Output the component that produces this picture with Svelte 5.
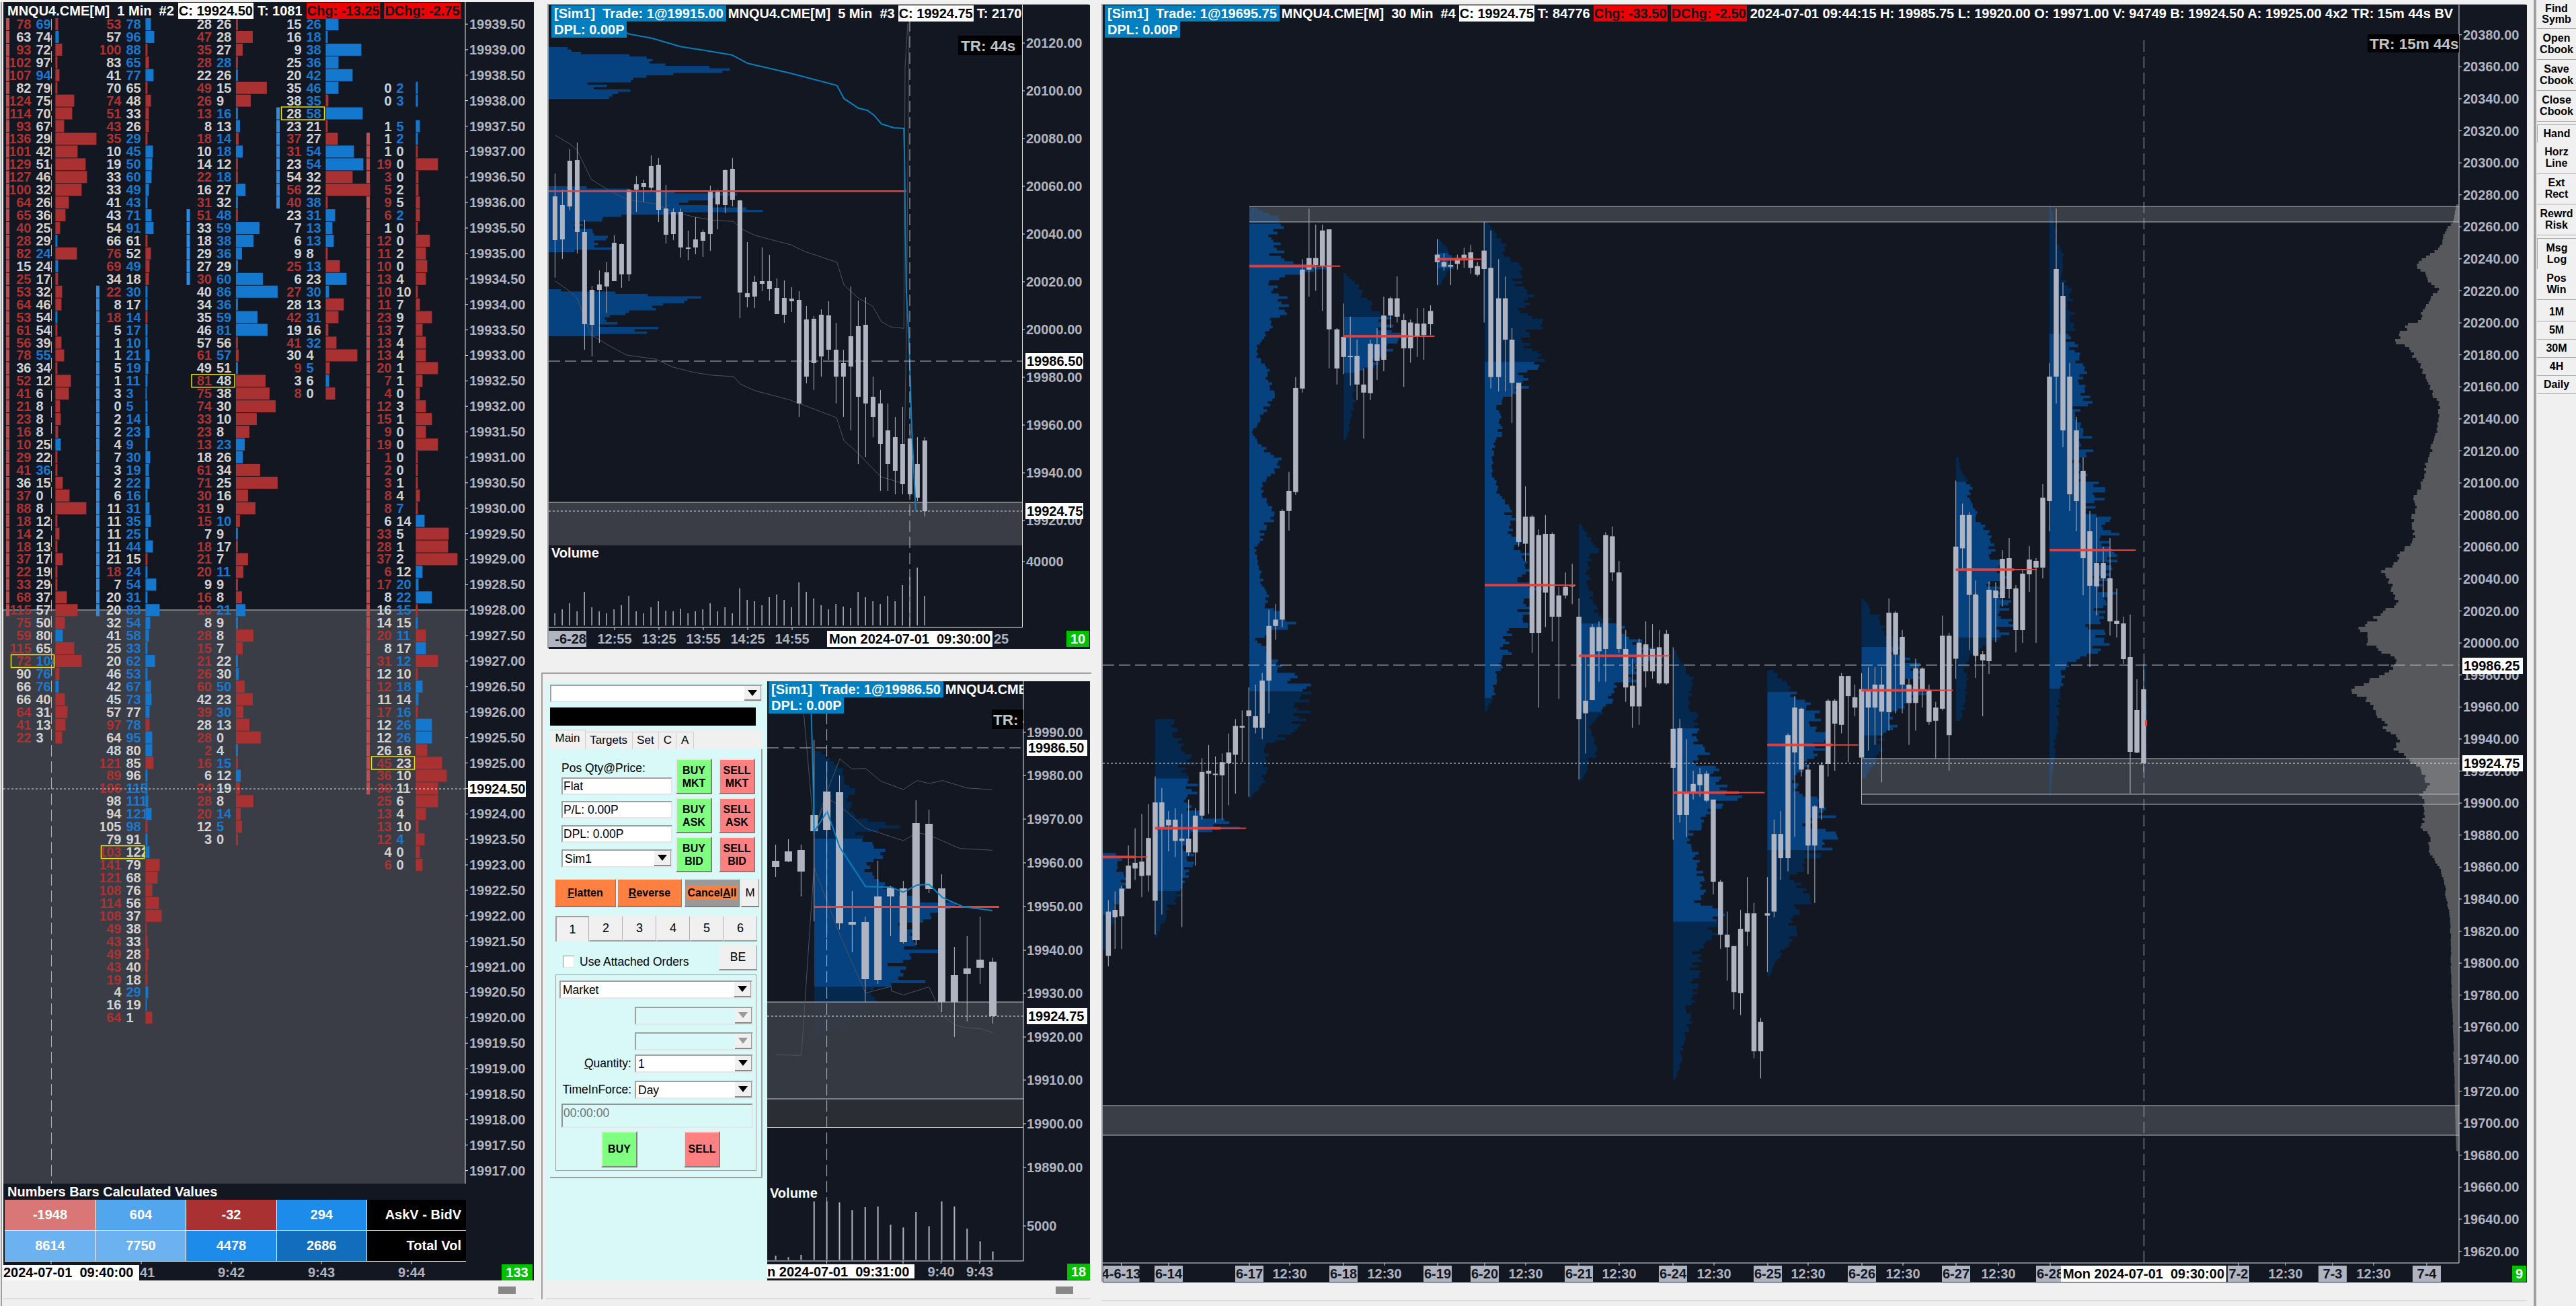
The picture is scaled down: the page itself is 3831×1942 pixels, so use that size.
<script>
// crop readings -> page pixels
const crop = (x0, sx, y0, sy) => ([x, y]) => [x0 + x / sx, y0 + y / sy];
const c3 = crop(800, 1.96, 990, 3);
const c4 = crop(800, 1.96, 1400, 2.893);
const c7 = crop(800, 1.889, 0, 3);

const noise = (i) => {
  const v = Math.sin(i * 12.9898 + 4.1) * 43758.5453;
  return v - Math.floor(v);
};

const line = (pts) => pts.map((p) => p[0].toFixed(1) + ',' + p[1].toFixed(1)).join(' ');

function lerp(anchors, y) {
  for (let i = 1; i < anchors.length; i++) {
    if (y <= anchors[i][0]) {
      const a = anchors[i - 1], b = anchors[i];
      return a[1] + ((y - a[0]) / (b[0] - a[0])) * (b[1] - a[1]);
    }
  }
  return anchors[anchors.length - 1][1];
}

// stepped volume profile: two paths, value area and the rest
function profile(x0, anchors, vaTop, vaBot, step = 4, jitter = 0.16) {
  let va = '', rest = '';
  const y0 = anchors[0][0], y1 = anchors[anchors.length - 1][0];
  let n = Math.round(x0);
  for (let y = y0; y < y1; y += step) {
    n++;
    const slow = noise(Math.floor(n / 4) + 900) - 0.5;
    const w = lerp(anchors, y) * (1 + jitter * (noise(n) - 0.5) + jitter * slow);
    const seg = `M${x0} ${y}h${w.toFixed(1)}v${step}h${-w.toFixed(1)}z`;
    if (y >= vaTop && y < vaBot) va += seg;
    else rest += seg;
  }
  return { va, rest };
}

/* ---------- footprint chart ---------- */
const fpCols = [
  'r78 b69 -4,g63 g74 5,r93 g72 -10,r102 g97 -3,r107 b94 -6,g82 g79 -3,r124 g75 -28,r114 g70 -25,r93 g67 -13,r136 g29 -61,r101 g42 -33,r129 g51 -45,r127 g46 -47,r100 g32 -39,r64 g26 -20,r65 g36 -15,r40 g25 -7,r28 g29 3,r82 b24 -32,g15 g24 4,r25 g17 -4,r53 g32 -10,r64 g46 -9,r53 g54 3,r61 g54 -3,r56 g39 -9,r78 b55 -13,g36 g34 -3,r52 g12 -23,r41 g6 -20,r21 g8 -7,r23 g8 -8,r16 g8 -4,r10 g25 8,r29 g22 -3,r41 b36 -3,g36 g15 -11,r37 g0 -21,r88 g8 -46,r18 g12 -3,r14 g2 -6,r18 g13 -3,r37 g17 -11,r22 g19 -3,r33 g29 -3,r68 g37 -17,r115 g57 -33,r75 g50 -14,r59 g80 11,r115 g65 -28,r72 b104 -39,g90 b76 -6,g66 b76 5,g66 g40 -14,r64 g31 -18,r41 g13 -15,r22 g3 -10',
  'r53 b78 8,g57 b96 13,r100 b88 -3,g83 b65 -5,g41 b77 12,g70 g65 -3,r74 g48 -8,r51 g33 -5,r43 g26 -5,r35 b29 -3,g10 b45 11,g19 b50 10,g33 b60 9,g33 b49 5,g41 b43 3,g43 b71 9,g54 b91 12,g66 g61 -3,r76 g52 -8,r69 b49 -6,g34 g18 -5,r22 b30 3,g8 g17 3,r18 b14 -3,g5 b17 3,g1 b10 3,g1 b21 6,g5 b19 4,g1 b11 3,g3 b3 2,g0 b5 3,g2 b14 3,g2 b23 6,g4 b9 3,g7 b30 7,g3 b19 5,g2 b22 6,g6 b16 3,g11 b31 6,g11 b35 8,g11 b25 4,g11 b44 11,g21 g15 -3,r18 b24 3,g7 b54 16,g20 b31 3,g20 b83 21,g32 b54 7,g41 b58 5,g25 b33 3,g20 b62 14,g46 b53 3,g42 b67 8,g45 b73 9,g57 g77 6,r97 b78 -6,g64 b95 10,g48 g80 10,r121 g85 -12,r89 g96 3,r106 b115 3,g98 b111 4,g94 b121 9,g105 b98 -3,g79 g91 3,r103 g122 6,r141 g79 -21,r121 g68 -18,r108 g76 -10,r114 g56 -20,r108 g37 -24,r49 g38 -2,r43 g33 -3,r49 g28 -5,r43 g40 -3,r19 g18 -3,g4 b29 4,g16 g19 2,r64 g1 -10',
  'g28 g26 -3,r47 g28 -25,r35 g27 -10,r28 b28 -3,g22 g26 3,r49 g15 -46,r26 g9 -22,r13 b16 3,g8 g13 6,r18 b14 -4,g10 b18 10,g14 g12 -3,r22 b18 -3,g16 g27 14,r31 g32 3,r51 b48 -3,g33 b59 35,g18 b38 26,g29 b36 9,g27 g29 3,r30 b60 40,g40 b86 62,g34 b36 3,g35 b59 32,g46 b81 47,g57 g56 -3,r61 b57 -4,g49 g51 3,r81 g48 -44,r75 g38 -50,r74 g30 -59,r33 g10 -31,r23 g8 -20,r13 b23 13,g18 g26 10,r61 g34 -36,r71 g25 -62,r30 g16 -18,r31 g9 -29,r15 b10 -6,g7 g9 3,r18 g17 -3,r21 g7 -18,r20 b11 -11,g9 g9 -3,r16 g8 -9,r10 b21 14,g8 g9 3,r28 g8 -26,r15 g7 -10,r21 g22 3,r26 g30 4,r60 b50 -13,g42 g23 -25,r39 b30 -11,g28 g13 -20,r28 g0 -37,r2 g4 3,r16 b15 -3,g6 g12 7,r24 g19 -6,r28 g8 -26,r20 b14 -7,g12 b5 -9,g3 g0 -3',
  'g15 b26 19,g16 b18 3,g9 b38 53,g25 b36 19,g20 b42 40,g35 b46 19,g38 b35 -4,g28 b58 55,g23 g21 -3,r37 g27 -18,r31 b54 42,g23 b54 56,g54 g32 -40,r56 g22 -66,r40 b38 -3,g23 b31 14,g7 b13 10,g6 b13 12,g9 g8 -3,r25 b13 -21,g6 g23 31,r27 b30 5,g28 g13 -27,r42 b31 -19,g19 g16 -4,r41 b32 -16,g30 g4 -47,r9 b5 -6,g3 g6 5,r8 g0 -14',
  ',,,,,g0 b2 3,g0 b3 3,,g1 b5 6,g1 b2 3,g1 g0 -3,r19 g0 -33,r3 g0 -4,r5 g2 -4,r9 g5 -6,r6 b2 -6,g1 g0 -3,r12 g0 -21,r11 g2 -15,r10 g0 -17,r13 g4 -15,r10 g10 -3,r11 g7 -6,r23 g9 -24,r13 g7 -10,r13 g4 -15,r13 g4 -15,r20 g1 -33,r7 g1 -10,r4 g0 -6,r12 g3 -15,r15 g1 -24,r9 g0 -15,r19 g0 -33,r1 g0 -3,r2 g0 -3,r3 g1 -3,r8 g4 -6,r8 b7 -3,g6 g14 13,r33 g5 -49,r28 g1 -48,r37 g2 -62,r6 g12 10,r17 b20 4,g8 b22 24,g16 b15 -3,g14 g15 3,r20 b11 -15,g8 g17 15,r31 b12 -33,g12 g10 -3,r12 b18 10,g11 g14 4,r17 b16 -3,g12 b26 24,g12 b26 24,g26 g16 -17,r45 g23 -39,r36 g10 -46,r30 g11 -33,r25 g6 -33,r13 g4 -15,r13 g10 -4,r12 b4 -13,g4 g0 -6,r6 g0 -10'
];
const numColor = { r: '#ad3232', b: '#1a78d0', g: '#d2d2d2' };
const rowY = (k) => 36 + 18.94 * k;
const colX = [9, 143, 277.5, 411, 545];
const footprint = fpCols.map((s) =>
  s.split(',').map((cell) => {
    if (!cell) return null;
    const [a, b, bar] = cell.split(' ');
    return { ac: numColor[a[0]], an: a.slice(1), bc: numColor[b[0]], bn: b.slice(1), bar: +bar };
  })
);
const sideBars = [
  { col: 0, from: 0, to: 46, fill: '#c84a4a' },
  { col: 1, from: 21, to: 46, fill: '#2a8ee8' },
  { col: 2, from: 15, to: 20, fill: '#2a8ee8' },
  { col: 3, from: 7, to: 14, fill: '#2a8ee8' },
  { col: 4, from: 9, to: 60, fill: '#c84a4a' }
];
const range = (a, b) => Array.from({ length: b - a + 1 }, (_, i) => a + i);
const imbalance = [
  { col: 3, row: 7 }, { col: 0, row: 50 }, { col: 1, row: 65 }, { col: 2, row: 28 }, { col: 4, row: 58 }
];
const fpPrices = range(0, 45).map((k) => ({ y: 36 + 37.88 * k, t: (19939.5 - k * 0.5).toFixed(2) }));

/* ---------- 5 min chart ---------- */
const hi = [[258,292,357,413],[282,305,356,385],[222,239,307,313],[212,238,345,377],[327,345,482,520],[425,431,483,530],[402,423,431,510],[390,405,426,465],[350,361,418,418],[362,363,408,428],[282,282,408,418],[262,274,282,315],[267,272,278,300],[231,247,279,283],[235,245,312,330],[275,310,349,362],[310,315,348,357],[310,315,368,383],[343,368,369,387],[323,356,368,378],[342,345,358,382],[276,283,348,373],[282,283,304,341],[252,253,305,317],[235,251,297,307],[297,298,435,473],[360,436,442,457],[410,419,441,458],[368,418,422,433],[379,418,430,447],[414,428,467,467],[417,443,468,480],[427,444,448,464],[433,446,600,620],[455,475,560,570],[470,474,540,580],[460,468,530,560],[448,469,520,535],[480,520,560,600],[520,540,560,620],[426,500,545,640],[447,485,590,690],[442,483,600,680],[560,590,620,650],[580,600,660,730],[600,640,690,730],[620,650,700,735],[605,660,720,735],[640,652,735,737],[650,690,740,745],[650,655,760,768]];
const candles5 = hi.map((c, i) => [825.4 + 11 * i, ...c]);
const prof5 = [
  profile(816, [[70,32],[77,56],[83,111],[90,127],[99,222],[107,206],[115,153],[125,85],[133,127],[142,100],[147,32]], 60, 150, 3.5, 0.5),
  profile(816, [[277,64],[283,222],[293,185],[302,196],[313,265],[320,106],[333,53],[343,74],[353,79],[367,122],[373,5]], 270, 380, 3.5, 0.5),
  profile(816, [[430,21],[435,175],[445,159],[457,154],[462,90],[480,106],[490,212],[500,16]], 425, 505, 3.5, 0.5)
];
const vwap5 = [[236,140],[260,153],[320,170],[400,208],[470,225],[545,245],[590,283],[710,327],[840,381],[860,440],[900,482],[925,492],[945,515],[965,553],[1000,570],[1028,573],[1030,720],[1032,1000],[1035,1300],[1042,1500]].map(c7).concat([[1356,640],[1362,760]]);
const band5a = [[48,603],[90,642],[110,670],[150,800],[200,850],[250,890],[330,910],[380,945],[440,968],[490,982],[550,988],[570,1020],[610,1050],[710,1092],[750,1122],[840,1170],[860,1272],[900,1330],[940,1365],[965,1435],[990,1458],[1028,1465]].map(c7).concat([[1346,100],[1350,35]]);
const band5b = [[48,1253],[90,1300],[110,1330],[150,1495]].map(c7).concat([[906,514],[932,528],[975,534],[1001,546],[1033,554],[1059,558],[1091,560],[1101,571],[1123,581],[1176,595],[1244,621],[1255,655],[1276,674],[1310,709],[1344,719],[1348,500],[1352,30]]);
const prices5 = range(0, 10).map((k) => ({ y: 64 + 71 * k, t: (20120 - 20 * k).toFixed(2) }));
const vol5 = [18,24,33,21,50,27,21,18,24,30,44,21,18,27,36,22,21,25,18,21,24,33,21,27,18,55,38,36,30,42,46,38,27,64,50,40,30,24,32,28,26,50,42,36,32,44,36,60,72,86,44];

/* ---------- 1 min profile chart (order panel) ---------- */
const candles1 = [
  [693,1256,1280,1289,1304],[730,1248,1266,1281,1282],[767,1256,1264,1296,1333],[805,1100,1212,1236,1370],[842,1133,1177,1234,1395],[879,1153,1178,1373,1382],[916,1325,1371,1375,1416],[954,1363,1371,1456,1490],[991,1280,1333,1457,1463],[1028,1317,1320,1333,1392],[1065,1310,1321,1401,1403],[1102,1190,1224,1398,1405],[1140,1204,1225,1322,1328],[1177,1300,1321,1490,1505],[1214,1408,1450,1490,1542],[1251,1392,1440,1448,1519],[1289,1363,1427,1439,1463],[1326,1424,1430,1511,1522]
].map(([x, ...r]) => [800 + x / 1.96, ...r]);
const prof1 = profile(1211, [[1117,10],[1130,25],[1145,45],[1165,40],[1175,56],[1200,45],[1215,60],[1225,125],[1235,65],[1246,75],[1265,100],[1280,85],[1300,90],[1320,110],[1340,181],[1348,210],[1360,160],[1375,120],[1395,140],[1405,120],[1415,166],[1430,120],[1450,115],[1457,155],[1466,95],[1490,85],[1505,65],[1520,40],[1535,15],[1543,5]], 1246, 1466, 5, 0.22);
const vwap1 = [[797,215],[803,560],[805,740],[843,650],[880,810],[955,985],[1030,988],[1065,1010],[1105,978],[1140,975],[1180,1035],[1240,1075],[1325,1092]].map(c3);
const band1a = [[775,215],[805,735],[843,560],[880,415],[915,460],[955,458],[1000,515],[1065,552],[1105,512],[1140,525],[1180,512],[1250,545],[1325,553]].map(c3);
const band1b = [[805,730],[843,590],[880,625],[955,725],[1065,780],[1105,745],[1140,755],[1230,815],[1325,823]].map(c3);
const band1c = [[692,487],[768,490],[790,0]].map(c4).concat([[805,900],[880,1200],[955,1460],[1030,1430]].map(c3)).concat([[1030,212],[1065,230],[1140,195],[1180,320],[1215,358],[1250,372],[1290,375],[1325,392]].map(c4));
const prices1 = [[1089,'19990.00'],[1153,'19980.00'],[1218,'19970.00'],[1283,'19960.00'],[1348,'19950.00'],[1413,'19940.00'],[1477,'19930.00'],[1542,'19920.00'],[1606,'19910.00'],[1671,'19900.00'],[1736,'19890.00'],[1823,'5000']];
const vol1 = [1352,1358,1348,1118,1118,1122,1155,1143,1140,1218,1230,1163,1225,1118,1140,1235,1290,1333];

/* ---------- 30 min chart ---------- */
const zc = [[10,1215,1235,1312,1330],[22,1200,1232,1245,1300],[34,1190,1195,1243,1300],[46,1120,1155,1195,1195],[58,1090,1150,1160,1180],[70,1065,1148,1173,1210],[82,1048,1107,1172,1200],[94,1000,1045,1216,1275],[106,1020,1045,1088,1240],[118,1060,1075,1085,1130],[130,1055,1075,1112,1140],[142,1065,1108,1112,1262],[154,1040,1108,1132,1138],[166,1055,1068,1132,1155],[178,968,992,1068,1075],[190,945,990,995,1065],[202,965,995,997,1080],[214,960,975,998,1075],[226,925,958,977,1050],[238,900,912,962,1030],[250,885,912,915,975],[262,845,885,895,1035],[274,840,895,915,925],[286,820,833,915,935],[298,710,738,833,890],[310,700,727,738,762],[322,535,538,727,740],[334,470,503,538,572],[346,305,324,505,510],[358,100,118,325,332],[370,12,98,118,165],[382,40,98,110,155],[394,40,50,112,190],[406,48,48,222,290],[420,220,222,290,318],[432,177,235,270,300],[444,200,268,270,320],[456,240,268,318,345],[468,290,318,332,412],[480,240,247,333,345],[492,220,248,277,310],[504,165,198,275,295],[516,165,168,198,220],[528,130,168,200,210],[540,195,206,255,322],[552,205,210,255,280],[564,185,212,235,270],[576,185,212,232,275],[588,180,190,213,232],[600,65,92,105,145],[612,90,105,113,120],[624,100,110,113,145],[636,92,98,108,118],[648,80,92,98,115],[660,75,88,115,125],[672,105,112,127,130],[684,35,85,117,210],[696,50,115,305,325],[710,100,168,305,330],[722,130,168,240,330],[734,220,240,315,385],[746,315,315,592,600],[758,495,548,595,625],[770,545,548,750,785],[782,570,580,750,880],[794,545,578,680,740],[806,575,578,722,765],[818,670,685,722,865],[830,645,670,685,690],[842,630,667,669,700],[854,690,722,900,1005],[866,790,868,890,960],[878,735,740,867,865],[890,730,740,782,835],[902,575,580,778,835],[914,565,582,645,660],[926,625,645,778,785],[938,745,778,845,870],[950,795,842,878,915],[962,760,767,878,910],[974,730,770,817,845],[986,735,778,817,830],[998,745,775,838,840],[1011,745,752,838,840],[1023,775,917,985,1110],[1035,900,916,1067,1080],[1047,935,1028,1067,1105],[1059,990,1013,1028,1040],[1071,985,996,1015,1035],[1083,990,995,1042,1045],[1095,1040,1040,1183,1205],[1108,1180,1183,1275,1300],[1120,1235,1275,1297,1355],[1132,1295,1295,1375,1405],[1144,1232,1265,1377,1415],[1156,1175,1238,1270,1295],[1168,1220,1238,1478,1490],[1180,1420,1427,1478,1525],[1192,1175,1238,1242,1340],[1204,1075,1100,1235,1245],[1216,1060,1100,1142,1180],[1229,925,928,1142,1165],[1241,860,880,958,1105],[1253,880,882,988,1000],[1265,980,988,1120,1170],[1277,1050,1052,1120,1220],[1289,975,980,1055,1075],[1301,865,868,978,1000],[1313,865,868,908,990],[1325,820,825,910,925],[1337,825,825,860,975],[1349,840,862,880,895],[1361,820,848,967,1000],[1373,810,850,880,955],[1385,810,840,880,945],[1397,810,840,887,1010],[1410,690,715,888,920],[1422,712,715,788,890],[1434,745,757,840,890],[1446,830,840,872,945],[1458,795,812,872,920],[1470,810,812,848,880],[1482,840,850,905,910],[1494,870,880,903,968],[1506,720,755,882,885],[1518,750,755,928,990],[1530,485,600,795,830],[1542,525,545,603,640],[1554,540,545,684,780],[1566,680,685,790,800]];
const candles30 = zc.map(([x, a, b, c, d]) => [1640 + x / 1.206, 300 + a / 1.17, 300 + b / 1.17, 300 + c / 1.17, 300 + d / 1.17]).concat([
  [2938,863,884,974,1008],[2948.7,968,973,982,1065],[2958,865,877,983,1002],[2968,866,878,889,955],[2978,818,831,889,902],[2988,800,830,876,890],[2998,870,875,937,970],[3008,848,853,937,956],[3018,812,832,854,880],[3028,830,834,844,956],[3038,720,740,844,860],[3048,540,560,745,790],[3058,310,400,560,600],[3068,420,440,640,665],[3078,540,560,735,760],[3088,620,640,745,790],[3098,680,700,830,885],[3108,760,790,871,992],[3118,770,837,872,915],[3128,813,837,860,888],[3138,800,860,924,945],[3148,875,923,928,948],[3158,917,927,980,987],[3168,914,977,1118,1180],[3178,1010,1056,1119,1120],[3188,988,1025,1135,1148]
]);
const pX = (zx) => 1640 + zx / 1.206;
const zProfiles = [
  { x: 0, a: [[1133,30],[1160,40],[1200,35],[1240,20],[1300,6]], v: [1133,1240] },
  { x: 94, a: [[900,28],[960,60],[1000,62],[1050,65],[1090,118],[1110,60],[1190,45],[1230,25],[1275,5]], v: [1000,1195] },
  { x: 263, a: [[10,15],[40,65],[60,50],[90,60],[112,120],[140,45],[190,60],[250,12],[300,35],[340,40],[400,4],[450,50],[500,20],[545,40],[600,10],[700,30],[730,85],[760,12],[840,90],[870,100],[915,95],[940,30],[1000,28],[1035,3]], v: [35,850] },
  { x: 432, a: [[125,5],[170,45],[200,75],[235,100],[270,70],[300,20],[350,20],[415,4]], v: [197,298] },
  { x: 600, a: [[65,5],[100,30],[145,3]], v: [85,115] },
  { x: 685, a: [[35,5],[80,40],[110,55],[170,75],[240,80],[280,85],[320,80],[350,30],[400,25],[430,12],[500,20],[560,50],[620,75],[667,90],[720,70],[760,50],[800,30],[840,20],[885,3]], v: [275,860] },
  { x: 854, a: [[560,5],[600,30],[660,15],[720,40],[740,65],[790,120],[830,90],[880,50],[900,20],[960,25],[1005,4]], v: [733,885] },
  { x: 1023, a: [[780,5],[830,30],[900,35],[950,50],[1000,70],[1028,118],[1060,60],[1110,30],[1160,40],[1210,60],[1270,80],[1300,50],[1380,35],[1470,20],[1525,3]], v: [915,1250] },
  { x: 1192, a: [[815,10],[850,55],[900,75],[945,100],[1000,40],[1060,100],[1130,100],[1170,50],[1240,65],[1300,25],[1345,3]], v: [848,1128] },
  { x: 1361, a: [[690,5],[740,45],[790,80],[850,115],[890,60],[930,40],[1000,10]], v: [770,925] },
  { x: 1530, a: [[445,5],[520,30],[640,80],[700,100],[760,70],[790,25],[900,10]], v: [485,755] },
  { x: 1698, a: [[5,3],[180,40],[350,60],[480,70],[600,100],[720,100],[770,95],[800,40],[830,22],[1030,2]], v: [225,845] },
  { x: 1867, a: [[780,2],[870,6],[960,5],[1020,1]], v: [900,900] }
];
const prof30 = zProfiles.map((p) =>
  profile(pX(p.x), p.a.map(([y, w]) => [300 + y / 1.17, w / 1.206]), 300 + p.v[0] / 1.17, 300 + p.v[1] / 1.17, 4, 0.42)
);
const pocs30 = [[0,1140,80],[94,1090,257],[263,112,426],[432,234,595],[600,100,680],[685,667,848],[854,790,1017],[1023,1028,1187],[1192,945,1355],[1361,850,1525],[1530,640,1675],[1698,606,1853]].map(([x, y, e]) => ({
  x1: pX(x), x2: pX(e), y: 300 + y / 1.17, hw: pX(x + (e - x) * 0.72)
}));
const allVol = profile(0, [[304,3],[329,8],[337,17],[346,22],[362,25],[367,30],[379,47],[390,60],[396,62],[402,50],[417,43],[429,27],[440,40],[459,50],[475,57],[480,72],[497,85],[509,88],[515,75],[530,65],[543,53],[563,46],[586,38],[597,28],[640,32],[700,50],[750,68],[800,64],[820,87],[835,98],[850,110],[863,100],[893,87],[903,106],[917,130],[932,143],[947,127],[957,135],[967,114],[975,101],[990,95],[998,106],[1010,132],[1027,156],[1040,145],[1050,135],[1063,119],[1083,108],[1093,85],[1113,93],[1128,77],[1140,59],[1153,50],[1167,45],[1180,61],[1197,50],[1217,53],[1228,58],[1240,45],[1267,42],[1293,24],[1368,12],[1466,10],[1564,7],[1710,3]], 0, 0, 4, 0.1);
const rightRows = allVol.rest.split('z').filter(Boolean).map((s) => {
  const m = s.match(/M0 ([\d.]+)h([\d.]+)/);
  return { y: +m[1], w: +m[2] };
});
const prices30 = range(0, 38).map((k) => ({ y: 51.7 + 47.6 * k, t: (20380 - 20 * k).toFixed(2) }));

const axis30 = [
  [1667.5,'4-6-13',1,54],[1738,'6-14',1,42],[1858,'6-17',1,42],[1918,'12:30'],[1998,'6-18',1,42],[2059,'12:30'],[2138,'6-19',1,42],[2208,'6-20',1,42],[2269,'12:30'],[2348,'6-21',1,42],[2408,'12:30'],[2488,'6-24',1,42],[2549,'12:30'],[2629,'6-25',1,42],[2689,'12:30'],[2769,'6-26',1,42],[2830,'12:30'],[2909,'6-27',1,42],[2972,'12:30'],[3049,'6-28',1,42],[3329,'7-2',1,32],[3399,'12:30'],[3469,'7-3',1,42],[3530,'12:30'],[3609,'7-4',1,42]
];

const tools = [
  { t: 'Find\nSymb', h: 43 }, { t: 'Open\nCbook', h: 46 }, { t: 'Save\nCbook', h: 46 }, { t: 'Close\nCbook', h: 46, mb: 4 },
  { t: 'Hand', h: 27, on: true }, { t: 'Horz\nLine', h: 46 }, { t: 'Ext\nRect', h: 46 }, { t: 'Rewrd\nRisk', h: 46, mb: 4 },
  { t: 'Msg\nLog', h: 46, on: true }, { t: 'Pos\nWin', h: 46, mb: 5 },
  { t: '1M', h: 27 }, { t: '5M', h: 27 }, { t: '30M', h: 27 }, { t: '4H', h: 27 }, { t: 'Daily', h: 27 }
];

const tableRows = [
  { cells: [['-1948', '#d97676'], ['604', '#52a6ee'], ['-32', '#a93131'], ['294', '#1d8bea']], label: 'AskV - BidV' },
  { cells: [['8614', '#6cb2f0'], ['7750', '#6cb2f0'], ['4478', '#1d8bea'], ['2686', '#126ebc']], label: 'Total Vol' }
];
</script>

{#snippet axisLabels(list, x)}
  {#each list as p}
    <line x1={x} x2={x + 4} y1={p.y} y2={p.y} class="rule" />
    <text x={x + 6} y={p.y + 7} class="ax">{p.t}</text>
  {/each}
{/snippet}

{#snippet priceTag(x, y, t, w = 86)}
  <rect x={x} y={y - 12} width={w} height="24" fill="#fff" />
  <text x={x + 2} y={y + 7} class="blk">{t}</text>
{/snippet}

{#snippet candles(list, w)}
  {#each list as c}
    <rect x={c[0] - 0.5} y={c[1]} width="1" height={c[4] - c[1]} fill="#b4b7c2" />
    <rect x={c[0] - w / 2} y={c[2]} width={w} height={Math.max(c[3] - c[2], 2)} fill="#b0b3c0" />
  {/each}
{/snippet}

{#snippet prof(p)}
  <path d={p.va} fill="#064280" />
  <path d={p.rest} fill="#05284f" />
{/snippet}

{#snippet chartHead(trade, sym, close, tick, chg, dchg, rest)}
  <div class="hdr">
    <div class="hrow">
      <span class="sim">{trade}</span>
      <span class="sym">{sym}</span>
      <span class="box-w">C: {close}</span>
      <span>T: {tick}</span>
      {#if chg}<span class="box-r">Chg: {chg}</span><span class="box-r">DChg: {dchg}</span>{/if}
      {#if rest}<span>{rest}</span>{/if}
    </div>
    <div class="hrow"><span class="dpl">DPL: 0.00P</span></div>
  </div>
{/snippet}

{#snippet combo(text, off)}
  <div class="combo" class:off>
    <span class="combo-t">{text}</span>
    <span class="arrow"><i></i></span>
  </div>
{/snippet}

<div class="desk">
  <!-- footprint window -->
  <section class="win w1">
    <div class="chart c1">
      <div class="hdr1">
        <span class="sym">MNQU4.CME[M]  1 Min  #2</span>
        <span class="box-w">C: 19924.50</span>
        <span>T: 1081</span>
        <span class="box-r">Chg: -13.25</span>
        <span class="box-r">DChg: -2.75</span>
      </div>
      <svg class="plot" width="789" height="1757" viewBox="5 3 789 1757">
        <rect x="5" y="907" width="687" height="853" fill="#3a3d45" />
        <line x1="5" x2="692" y1="907" y2="907" stroke="#c8c8c8" />
        {#each sideBars as s}
          {#each range(s.from, s.to) as k}
            <rect x={colX[s.col]} y={rowY(k) - 9} width="5" height="18" fill={s.fill} />
          {/each}
        {/each}
        {#each footprint as col, ci}
          {#each col as cell, k}
            {#if cell}
              <rect x={colX[ci] + 73.4} y={rowY(k) - 9} width={Math.abs(cell.bar)} height="18" fill={cell.bar < 0 ? '#aa3131' : '#1478cf'} />
              <svg x={colX[ci] + 6.5} y={rowY(k) - 11} width="66.5" height="22" overflow="hidden">
                <text x="31" y="18" text-anchor="end" class="num" fill={cell.ac}>{cell.an}</text>
                <text x="38" y="18" class="num" fill={cell.bc}>{cell.bn}</text>
              </svg>
            {/if}
          {/each}
        {/each}
        {#each imbalance as b}
          <rect x={colX[b.col] + 7.5} y={rowY(b.row) - 9.5} width="64" height="19" fill="none" stroke="#f0e000" stroke-width="1.5" />
        {/each}
        <line x1="76.5" x2="76.5" y1="28" y2="1760" class="dash" />
        <line x1="5" x2="692" y1="1173" y2="1173" class="dot" />
        <line x1="692" x2="692" y1="3" y2="1760" class="rule" />
        {@render axisLabels(fpPrices, 692)}
        {@render priceTag(696, 1173, '19924.50')}
      </svg>
      <div class="calc-title">Numbers Bars Calculated Values</div>
      <div class="calc">
        {#each tableRows as r}
          {#each r.cells as c}
            <div class="cell" style:background={c[1]}>{c[0]}</div>
          {/each}
          <div class="cell lab">{r.label}</div>
        {/each}
      </div>
      <svg class="plot" width="789" height="28" viewBox="5 1876 789 28">
        {#each [76, 210, 344, 478, 612] as x}
          <line x1={x} x2={x} y1="1876" y2="1880" class="rule" />
        {/each}
        <text x="208" y="1899" class="ax">41</text>
        <text x="344" y="1899" class="ax mid">9:42</text>
        <text x="478" y="1899" class="ax mid">9:43</text>
        <text x="612" y="1899" class="ax mid">9:44</text>
        <rect x="5" y="1881" width="202" height="23" fill="#fff" />
        <text x="5" y="1899" class="blk">2024-07-01  09:40:00</text>
        <rect x="746" y="1880" width="46" height="24" fill="#00c000" />
        <text x="769" y="1899" class="wht mid">133</text>
      </svg>
    </div>
    <div class="grip"><i></i></div>
  </section>

  <div class="midcol">
    <!-- 5 min window -->
    <section class="chart c2">
      {@render chartHead('[Sim1]  Trade: 1@19915.00', 'MNQU4.CME[M]  5 Min  #3', '19924.75', '2170')}
      <svg class="plot" width="805" height="958" viewBox="816 7 805 958">
        {#each prof5 as p}{@render prof(p)}{/each}
        <rect x="816" y="747" width="704" height="64" fill="#3a3d45" />
        <line x1="816" x2="1520" y1="747" y2="747" stroke="#c8c8c8" />
        <polyline points={line(band5a)} class="band" />
        <polyline points={line(band5b)} class="band" />
        {@render candles(candles5, 7)}
        <rect x="816" y="283" width="532" height="2.5" fill="#e8403a" />
        <polyline points={line(vwap5)} class="vwap" />
        <line x1="1353" x2="1353" y1="30" y2="933" class="dash" />
        <line x1="816" x2="1520" y1="537" y2="537" class="dash" />
        <line x1="816" x2="1520" y1="760" y2="760" class="dot" />
        <text x="820" y="829" class="wht">Volume</text>
        {#each vol5 as v, i}
          <rect x={824.4 + 11 * i} y={930 - v} width="1.5" height={v} fill="#b0b3c0" />
        {/each}
        <line x1="1520.5" x2="1520.5" y1="7" y2="933" class="rule" />
        <line x1="816" x2="1520" y1="933" y2="933" class="rule" />
        {@render axisLabels(prices5, 1520)}
        <line x1="1520" x2="1524" y1="835" y2="835" class="rule" />
        <text x="1526" y="842" class="ax">40000</text>
        {@render priceTag(1525, 537, '19986.50')}
        {@render priceTag(1525, 760, '19924.75')}
        <rect x="1425" y="53" width="94" height="29" fill="#000" />
        <text x="1429" y="76" class="tr">TR: 44s</text>
        <rect x="816" y="938" width="56" height="24" fill="#b0b3c0" />
        <text x="872" y="957" text-anchor="end" class="dk">-6-28</text>
        {#each [[914,'12:55'],[980,'13:25'],[1046,'13:55'],[1112,'14:25'],[1178,'14:55']] as a}
          <line x1={a[0]} x2={a[0]} y1="933" y2="937" class="rule" />
          <text x={a[0]} y="957" class="ax mid">{a[1]}</text>
        {/each}
        <text x="1478" y="957" class="ax">25</text>
        <rect x="1230" y="938" width="246" height="24" fill="#fff" />
        <text x="1353" y="957" class="blk mid">Mon 2024-07-01  09:30:00</text>
        <rect x="1586" y="938" width="34" height="24" fill="#00c000" />
        <text x="1603" y="957" class="wht mid">10</text>
      </svg>
    </section>

    <!-- order window -->
    <div class="lowerwrap">
      <section class="lower">
        <div class="panel">
          <div class="combo top"><span class="combo-t"></span><span class="arrow"><i></i></span></div>
          <div class="blackbar"></div>
          <div class="tabs">
            <span class="tab on">Main</span><span class="tab">Targets</span><span class="tab">Set</span><span class="tab">C</span><span class="tab">A</span>
          </div>
          <div class="page">
            <div class="trade">
              <div class="fields">
                <div class="cap">Pos Qty@Price:</div>
                <div class="field">Flat</div>
                <div class="field gap9">P/L: 0.00P</div>
                <div class="field gap10">DPL: 0.00P</div>
                <div class="gap10">{@render combo('Sim1')}</div>
              </div>
              <div class="btncol">
                <button class="bb green">BUY<br />MKT</button>
                <button class="bb green">BUY<br />ASK</button>
                <button class="bb green">BUY<br />BID</button>
              </div>
              <div class="btncol">
                <button class="bb pink">SELL<br />MKT</button>
                <button class="bb pink">SELL<br />ASK</button>
                <button class="bb pink">SELL<br />BID</button>
              </div>
            </div>
            <div class="actions">
              <button class="act w90"><u>F</u>latten</button>
              <button class="act w96"><u>R</u>everse</button>
              <button class="act cancel"><span>Cancel<u>A</u>ll</span></button>
              <button class="act plain">M</button>
            </div>
            <div class="numtabs">
              {#each [1, 2, 3, 4, 5, 6] as n}
                <button class="nt" class:down={n === 1}>{n}</button>
              {/each}
            </div>
            <div class="attach">
              <span class="check"></span>
              <span class="attach-t">Use Attached Orders</span>
              <button class="be">BE</button>
            </div>
            <div class="orderbox">
              <div class="full">{@render combo('Market')}</div>
              <div class="frow r1"><span class="flab"></span>{@render combo('', true)}</div>
              <div class="frow r2"><span class="flab"></span>{@render combo('', true)}</div>
              <div class="frow r3"><span class="flab"><u>Q</u>uantity:</span>{@render combo('1')}</div>
              <div class="frow r4"><span class="flab">TimeInForce:</span>{@render combo('Day')}</div>
              <div class="time">00:00:00</div>
              <div class="send">
                <button class="snd green">BUY</button>
                <button class="snd pink">SELL</button>
              </div>
            </div>
          </div>
        </div>
        <div class="chart c2b">
          <div class="hdr">
            <div class="hrow"><span class="sim">[Sim1]  Trade: 1@19986.50</span><span class="sym">MNQU4.CME[M]  1 Min</span></div>
            <div class="hrow"><span class="dpl">DPL: 0.00P</span></div>
          </div>
          <svg class="plot" width="480" height="891" viewBox="1141 1013 480 891">
            {@render prof(prof1)}
            <rect x="1141" y="1490" width="381" height="144" fill="#3a3d45" fill-opacity="0.9" />
            <rect x="1141" y="1634" width="381" height="42" fill="#2b2d34" />
            <line x1="1141" x2="1522" y1="1490" y2="1490" stroke="#c8c8c8" />
            <line x1="1141" x2="1522" y1="1634" y2="1634" stroke="#c8c8c8" />
            <line x1="1141" x2="1522" y1="1676.5" y2="1676.5" stroke="#c8c8c8" />
            <polyline points={line(band1a)} class="band" />
            <polyline points={line(band1b)} class="band" />
            <polyline points={line(band1c)} class="band" />
            {@render candles(candles1, 11)}
            <rect x="1211" y="1347" width="275" height="3" fill="#e8403a" />
            <polyline points={line(vwap1)} class="vwap" />
            <line x1="1229.6" x2="1229.6" y1="1060" y2="1875" class="dash" />
            <line x1="1141" x2="1522" y1="1112" y2="1112" class="dash" />
            <line x1="1141" x2="1522" y1="1511" y2="1511" class="dot" />
            <text x="1145" y="1781" class="wht">Volume</text>
            {#each vol1 as v, i}
              <rect x={candles1[i][0] - 1} y={1400 + v / 2.893} width="2" height={1873.5 - 1400 - v / 2.893} fill="#b0b3c0" />
            {/each}
            <line x1="1522" x2="1522" y1="1013" y2="1875" class="rule" />
            <line x1="1141" x2="1522" y1="1875" y2="1875" class="rule" />
            {#each prices1 as p}
              <line x1="1522" x2="1526" y1={p[0]} y2={p[0]} class="rule" />
              <text x="1527" y={p[0] + 7} class="ax">{p[1]}</text>
            {/each}
            {@render priceTag(1527, 1112, '19986.50', 90)}
            {@render priceTag(1527, 1511, '19924.75', 90)}
            <rect x="1475" y="1055" width="47" height="29" fill="#000" />
            <svg x="1475" y="1055" width="47" height="29" overflow="hidden"><text x="2" y="23" class="tr">TR: 44s</text></svg>
            {#each [1229.6, 1343, 1399.5, 1457] as x}
              <line x1={x} x2={x} y1="1875" y2="1879" class="rule" />
            {/each}
            <text x="1399.5" y="1898" class="ax mid">9:40</text>
            <text x="1457" y="1898" class="ax mid">9:43</text>
            <rect x="1141" y="1880" width="219" height="21" fill="#fff" />
            <text x="1141" y="1898" class="blk">n 2024-07-01  09:31:00</text>
            <rect x="1587" y="1879" width="34" height="24" fill="#00c000" />
            <text x="1604" y="1898" class="wht mid">18</text>
          </svg>
        </div>
      </section>
      <div class="grip low"><i></i></div>
    </div>
  </div>

  <!-- 30 min window -->
  <section class="chart c3">
    {@render chartHead('[Sim1]  Trade: 1@19695.75', 'MNQU4.CME[M]  30 Min  #4', '19924.75', '84776', '-33.50', '-2.50', '2024-07-01 09:44:15 H: 19985.75 L: 19920.00 O: 19971.00 V: 94749 B: 19924.50 A: 19925.00 4x2 TR: 15m 44s BV')}
    <svg class="plot" width="2118" height="1900" viewBox="1640 7 2118 1900">
      {#each prof30 as p}{@render prof(p)}{/each}
      {#each rightRows as r}
        <rect x={3656 - r.w} y={r.y} width={r.w} height="4" fill="#56585c" />
      {/each}
      <rect x="1858" y="307" width="1799" height="23" class="shade" />
      <rect x="2768.5" y="1128" width="888" height="53" class="shade" />
      <rect x="2768.5" y="1181" width="888" height="15" fill="#ffffff" fill-opacity="0.09" />
      <rect x="1640" y="1644" width="2017" height="44" class="shade" />
      <path d="M1858 307H3657M1858 330H3657M2768.5 1128H3657M2768.5 1181H3657M2768.5 1196H3657M2768.5 1128V1196M1640 1688H3657M1640 1644H3657" stroke="#b8b8b8" fill="none" />
      {@render candles(candles30, 7.5)}
      {#each pocs30 as p}
        <rect x={p.x1} y={p.y - 1} width={p.x2 - p.x1} height="2" fill="#e8403a" />
        <rect x={p.x1} y={p.y - 2} width={p.hw - p.x1} height="4" fill="#e8403a" fill-opacity="0.85" />
      {/each}
      <rect x="3190" y="1071" width="3" height="8" fill="#e8403a" />
      <line x1="3188.5" x2="3188.5" y1="60" y2="1878" class="dash" />
      <line x1="1640" x2="3657" y1="989" y2="989" class="dash" />
      <line x1="1640" x2="3657" y1="1135" y2="1135" class="dot" />
      <line x1="3657" x2="3657" y1="7" y2="1878" class="rule" />
      <line x1="1640" x2="3657" y1="1878" y2="1878" class="rule" />
      {@render axisLabels(prices30, 3657)}
      {@render priceTag(3662, 990, '19986.25', 90)}
      {@render priceTag(3662, 1135, '19924.75', 90)}
      <rect x="3521" y="51" width="136" height="27" fill="#000" />
      <svg x="3521" y="51" width="136" height="27" overflow="hidden"><text x="3" y="22" class="tr">TR: 15m 44s</text></svg>
      {#each axis30 as a}
        <line x1={a[0]} x2={a[0]} y1="1878" y2="1882" class="rule" />
        {#if a[2]}
          <rect x={a[0] - a[3] / 2} y="1882" width={a[3]} height="24" fill="#b0b3c0" />
          <text x={a[0]} y="1901" class="dk mid">{a[1]}</text>
        {:else}
          <text x={a[0]} y="1901" class="ax mid">{a[1]}</text>
        {/if}
      {/each}
      <rect x="3065" y="1882" width="246" height="24" fill="#fff" />
      <text x="3188" y="1901" class="blk mid">Mon 2024-07-01  09:30:00</text>
      <rect x="3736" y="1882" width="21" height="24" fill="#00c000" />
      <text x="3746.5" y="1901" class="wht mid">9</text>
    </svg>
  </section>

  <aside class="tools">
    {#each tools as b}
      <button class="tool" class:on={b.on} style:height="{b.h}px" style:margin-bottom="{b.mb || 0}px">{b.t}</button>
    {/each}
  </aside>
</div>

<style>
  :global(body) {
    margin: 0;
    background: #f0f0f0;
  }

  .desk {
    display: flex;
    width: 3831px;
    height: 1942px;
    overflow: hidden;
    background: #f0f0f0;
    font-family: "Liberation Sans", Arial, sans-serif;
  }

  .win {
    display: flex;
    flex-direction: column;
  }

  .w1 {
    width: 789px;
    margin: 3px 0 0 1px;
    padding-left: 2px;
    border-left: 2px solid #a0a0a0;
    box-sizing: content-box;
    flex: none;
  }

  .chart {
    position: relative;
    background: #121722;
    flex: none;
  }

  .c1 {
    width: 789px;
    height: 1901px;
    display: flex;
    flex-direction: column;
  }

  .plot {
    display: block;
    flex: none;
  }

  .hdr1 {
    position: absolute;
    top: 1px;
    left: 6px;
    width: 681px;
    height: 24px;
    display: flex;
    gap: 6px;
    overflow: hidden;
    font: bold 20px/24px "Liberation Sans", sans-serif;
    color: #fff;
    z-index: 2;
  }

  .hdr1 span {
    white-space: pre;
    flex: none;
  }

  .hdr {
    position: absolute;
    top: 1px;
    left: 3px;
    z-index: 2;
    font: bold 20px/24px "Liberation Sans", sans-serif;
    color: #fff;
    overflow: hidden;
  }

  .c2 .hdr {
    width: 701px;
    left: 4px;
  }

  .c2b .hdr {
    width: 379px;
    top: 0;
    left: 2px;
  }

  .c3 .hdr {
    width: 2014px;
  }

  .hrow {
    display: flex;
    height: 24px;
    gap: 5px;
  }

  .hrow span {
    white-space: pre;
    flex: none;
  }

  .sim,
  .dpl {
    background: #0080c0;
    padding: 0 4px;
  }

  .sim {
    margin-right: -2px;
  }

  .box-w {
    background: #fff;
    color: #000;
    padding: 0 1px;
  }

  .box-r {
    background: #f00000;
    color: #121722;
    padding: 0 1px;
  }

  .calc-title {
    height: 24px;
    font: bold 20px/24px "Liberation Sans", sans-serif;
    color: #fff;
    padding-left: 6px;
  }

  .calc {
    display: grid;
    grid-template-columns: 136px 134px 135px 133.5px 147.5px;
    grid-auto-rows: 45px;
    gap: 1px 0;
    width: 686px;
    margin-left: 2px;
    padding: 0 0 1px;
    background: #fff;
    box-sizing: border-box;
    height: 92px;
  }

  .cell {
    display: flex;
    align-items: center;
    justify-content: center;
    font: bold 20px "Liberation Sans", sans-serif;
    color: #fff;
    border-right: 1px solid #fff;
    box-sizing: border-box;
  }

  .cell.lab {
    background: #000;
    justify-content: flex-end;
    padding-right: 7px;
    border-right: 0;
  }

  .grip {
    flex: none;
    display: flex;
    justify-content: flex-end;
    height: 28px;
    width: 789px;
    border-bottom: 2px solid #dcdcdc;
    box-sizing: border-box;
    padding: 9px 27px 0 0;
  }

  .grip i {
    width: 26px;
    height: 11px;
    background: #888;
  }

  .midcol {
    width: 829px;
    padding-left: 10px;
    box-sizing: border-box;
    flex: none;
  }

  .c2 {
    width: 805px;
    height: 958px;
    margin: 7px 0 0 12px;
    box-shadow: -2px -1px 0 #a0a0a0;
  }

  .lowerwrap {
    margin: 35px 0 0 1px;
    border-top: 2px solid #a0a0a0;
    border-left: 2px solid #a0a0a0;
    width: 816px;
  }

  .lower {
    display: flex;
    margin: 11px 0 0 5px;
    height: 891px;
  }

  .grip.low {
    width: 809px;
    padding-right: 25px;
    margin-left: 5px;
  }

  .panel {
    width: 329px;
    flex: none;
    background: #d9f9f9;
    box-sizing: border-box;
    padding: 5px 7px 0 6px;
    font-size: 17.5px;
    color: #000;
  }

  .c2b {
    width: 480px;
    height: 891px;
  }

  .combo {
    display: flex;
    height: 27px;
    background: #fff;
    box-sizing: border-box;
    border: 2px solid;
    border-color: #a0a0a0 #e6e6e6 #e6e6e6 #a0a0a0;
    flex: 1;
  }

  .combo.off {
    background: #d9f9f9;
  }

  .combo-t {
    flex: 1;
    padding-left: 3px;
    line-height: 24px;
    white-space: nowrap;
    overflow: hidden;
  }

  .arrow {
    width: 25px;
    flex: none;
    display: flex;
    align-items: center;
    justify-content: center;
    background: #f0f0f0;
    border-right: 1px solid #999;
    border-bottom: 2px solid #888;
    box-sizing: border-box;
  }

  .arrow i {
    width: 0;
    height: 0;
    border: 7px solid transparent;
    border-top: 9px solid #000;
    border-bottom: 0;
  }

  .combo.off .arrow i {
    border-top-color: #9a9a9a;
  }

  .combo.top {
    height: 26px;
  }

  .blackbar {
    height: 27px;
    width: 306px;
    margin-top: 8px;
    background: #000;
  }

  .tabs {
    display: flex;
    height: 28px;
    margin-top: 7px;
    background: #f0f0f0;
    align-items: flex-end;
  }

  .tab {
    height: 25px;
    line-height: 24px;
    padding: 0 6.5px;
    border: 1px solid #d0d0d0;
    border-bottom: 0;
    font-size: 17px;
    background: #f0f0f0;
    border-left: 0;
  }

  .tab.on {
    height: 28px;
    padding: 0 7.5px;
  }

  .page {
    height: 638px;
    border-right: 2px solid #a0a0a0;
    border-bottom: 2px solid #a0a0a0;
    box-sizing: border-box;
    padding-top: 14px;
  }

  .trade {
    display: flex;
    height: 169px;
    padding-left: 17px;
  }

  .fields {
    width: 165px;
  }

  .cap {
    height: 28px;
    line-height: 28px;
  }

  .field {
    height: 26px;
    background: #fff;
    box-sizing: border-box;
    border: 2px solid;
    border-color: #a0a0a0 #e6e6e6 #e6e6e6 #a0a0a0;
    line-height: 23px;
    padding-left: 1px;
  }

  .gap9 {
    margin-top: 9px;
  }

  .gap10 {
    margin-top: 10px;
    display: flex;
  }

  .btncol {
    margin-left: 5px;
    width: 54px;
    display: flex;
    flex-direction: column;
    gap: 5px;
  }

  .btncol + .btncol {
    margin-left: 10px;
  }

  button {
    font-family: "Liberation Sans", sans-serif;
    padding: 0;
    color: #000;
    cursor: default;
  }

  .bb {
    height: 53px;
    font: bold 16px/19px "Liberation Sans", sans-serif;
    border: 2px solid;
    border-color: #e8e8e8 #808080 #808080 #e8e8e8;
  }

  .green {
    background: #80ff80;
  }

  .pink {
    background: #ff8080;
  }

  .actions {
    display: flex;
    margin: 10px 0 0 7px;
    height: 42px;
    gap: 2px;
  }

  .act {
    font: bold 16px "Liberation Sans", sans-serif;
    background: #ff8040;
    border: 1px solid;
    border-color: #e8e8e8 #808080 #808080 #e8e8e8;
    border-bottom-width: 2px;
  }

  .w90 {
    width: 91px;
  }

  .w96 {
    width: 96px;
  }

  .cancel {
    width: 82px;
    background: #999;
    margin-left: 2px;
  }

  .cancel span {
    background: #ff8040;
    padding: 2px;
  }

  .plain {
    width: 27px;
    background: #f0f0f0;
    font-weight: normal;
    font-size: 17px;
  }

  .numtabs {
    display: flex;
    margin: 13px 0 0 8px;
  }

  .nt {
    width: 50px;
    height: 38px;
    background: #f0f0f0;
    font-size: 18px;
    border: 1px solid #f0f0f0;
    border-right: 1px solid #b0b0b0;
    border-bottom: 2px solid #a0a0a0;
  }

  .nt.down {
    border-top: 2px solid #a0a0a0;
    border-left: 2px solid #a0a0a0;
    border-bottom: 0;
  }

  .attach {
    display: flex;
    align-items: center;
    height: 38px;
    margin-top: 5px;
    padding-left: 19px;
  }

  .check {
    width: 17px;
    height: 18px;
    background: #fff;
    box-sizing: border-box;
    border: 1px solid;
    border-color: #909090 #e6e6e6 #e6e6e6 #909090;
    margin-top: 12px;
  }

  .attach-t {
    margin: 12px 0 0 8px;
    flex: 1;
    white-space: nowrap;
  }

  .be {
    width: 57px;
    height: 38px;
    margin-right: 6px;
    background: #f0f0f0;
    font-size: 17.5px;
    border: 1px solid;
    border-color: #f0f0f0 #909090 #909090 #f0f0f0;
    border-bottom-width: 2px;
  }

  .orderbox {
    margin: 6px 0 0 8px;
    width: 299px;
    height: 292px;
    box-sizing: border-box;
    border: 1px solid #a0a0a0;
    padding-top: 8px;
  }

  .full {
    display: flex;
    margin: 0 5px;
    height: 28px;
  }

  .frow {
    display: flex;
    align-items: stretch;
    margin-right: 4px;
    height: 27px;
  }

  .r1 {
    margin-top: 11px;
  }

  .r2 {
    margin-top: 11px;
  }

  .r3 {
    margin-top: 6px;
  }

  .r4 {
    margin-top: 12px;
  }

  .flab {
    width: 117px;
    flex: none;
    padding-right: 5px;
    box-sizing: border-box;
    text-align: right;
    line-height: 27px;
    white-space: nowrap;
  }

  .time {
    margin: 7px 4px 0 8px;
    height: 36px;
    box-sizing: border-box;
    border: 2px solid;
    border-color: #909090 #e6e6e6 #e6e6e6 #909090;
    color: #707070;
    padding-left: 1px;
    line-height: 24px;
  }

  .send {
    display: flex;
    margin: 5px 0 0 67px;
    gap: 69px;
  }

  .snd {
    width: 54px;
    height: 54px;
    font: bold 16px "Liberation Sans", sans-serif;
    border: 2px solid;
    border-color: #e8e8e8 #808080 #808080 #e8e8e8;
  }

  .c3 {
    width: 2118px;
    height: 1900px;
    margin: 7px 0 0 17px;
    box-shadow: -2px -1px 0 #a0a0a0;
  }

  .c3::after {
    content: "";
    position: absolute;
    left: -2px;
    right: 0;
    top: 1926px;
    height: 2px;
    background: #dcdcdc;
  }

  .tools {
    flex: none;
    width: 59px;
    margin-left: 10px;
    padding-left: 1px;
    border-left: 4px solid #a0a0a0;
    display: flex;
    flex-direction: column;
  }

  .tool {
    width: 58px;
    white-space: pre-line;
    font: bold 16px/16.5px "Liberation Sans", sans-serif;
    background: #f0f0f0;
    border: 0;
    border-bottom: 1px solid #a8a8a8;
    flex: none;
  }

  .tool.on {
    border-top: 1px solid #a8a8a8;
    border-left: 1px solid #a8a8a8;
    border-bottom: 0;
  }

  .ax {
    font: bold 20px "Liberation Sans", sans-serif;
    fill: #b0b3bf;
  }

  .blk {
    font: bold 20px "Liberation Sans", sans-serif;
    fill: #000;
    white-space: pre;
  }

  .wht {
    font: bold 20px "Liberation Sans", sans-serif;
    fill: #fff;
  }

  .dk {
    font: bold 20px "Liberation Sans", sans-serif;
    fill: #121722;
  }

  .tr {
    font: bold 22.5px "Liberation Sans", sans-serif;
    fill: #c4c4c4;
  }

  .num {
    font: bold 20px "Liberation Sans", sans-serif;
  }

  .mid {
    text-anchor: middle;
  }

  .rule {
    stroke: #e8e8e8;
    stroke-width: 1;
  }

  .dash {
    stroke: #b8bac0;
    stroke-width: 1;
    stroke-dasharray: 17 7;
  }

  .dot {
    stroke: #e0e0e0;
    stroke-width: 1;
    stroke-dasharray: 3 3;
  }

  .band {
    fill: none;
    stroke: #4f535a;
    stroke-width: 1;
  }

  .vwap {
    fill: none;
    stroke: #0a7fc0;
    stroke-width: 2;
  }

  .shade {
    fill: #ffffff;
    fill-opacity: 0.17;
  }
</style>
